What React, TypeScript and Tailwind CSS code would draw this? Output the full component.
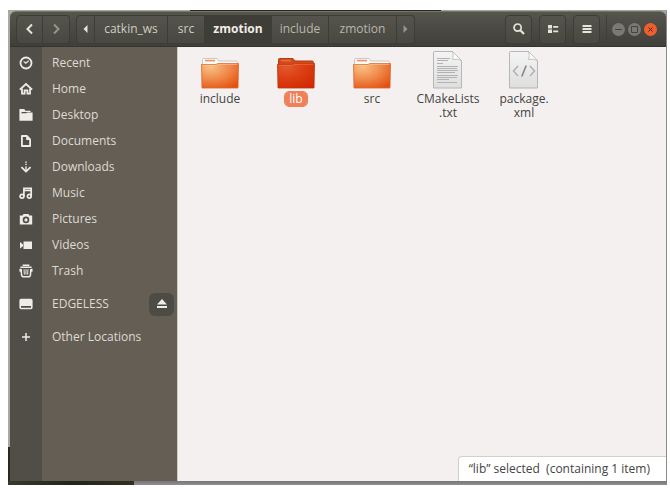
import React, { useId } from 'react';
import clsx from 'clsx';

const HEADER_BUTTON =
	'flex h-[29px] items-center justify-center border-[#3d3c36] bg-linear-to-b from-[#54534c] to-[#494841] text-[#e6e4dc]';

interface Crumb {
	label: string;
	width: string;
	active?: boolean;
	dim?: boolean;
}

const crumbs: Crumb[] = [
	{ label: 'catkin_ws', width: 'w-[73px]' },
	{ label: 'src', width: 'w-[37px]' },
	{ label: 'zmotion', width: 'w-[67px]', active: true },
	{ label: 'include', width: 'w-[57px]', dim: true },
	{ label: 'zmotion', width: 'w-[68px]', dim: true },
];

/* Sidebar glyphs, all on a 14x14 grid */
const icons: Record<string, React.ReactNode> = {
	recent: (
		<g fill="none" stroke="currentColor" strokeWidth="1.8">
			<circle cx="7" cy="7" r="5.5" />
			<path d="M4.6 5.4 6.8 7.2 9.6 4.8" strokeWidth="1.2" />
		</g>
	),
	home: (
		<g fill="none" stroke="currentColor" strokeWidth="1.8">
			<path d="M.8 7.6 7 2l6.2 5.6" />
			<path d="M3 6.500V11.700H5.600V8.300H8.400V11.700H11V6.500" />
		</g>
	),
	desktop: (
		<path d="M.4 1h5l.8 1.800h5.400V4H2.800v.8H2v7.900H.4ZM3.400 5.200H7L8 4.600h5.600v8.100H1.600V5.200Z" fill="currentColor" />
	),
	documents: (
		<g>
			<path d="M2.900 2h4.900l3.300 3.300v6.700H2.900Z" fill="none" stroke="currentColor" strokeWidth="1.8" strokeLinejoin="round" />
			<path d="M7.200 2v4h4Z" fill="currentColor" />
		</g>
	),
	downloads: (
		<g fill="none" stroke="currentColor" strokeWidth="1.8">
			<path d="M7 1.500v5" strokeDasharray="1.300 1" strokeWidth="1.500" />
			<path d="M7 6.800v4.500" strokeWidth="1.400" />
			<path d="M2.400 7.200 7 11.600l4.600-4.400" />
		</g>
	),
	music: (
		<g fill="none" stroke="currentColor" strokeWidth="1.7">
			<circle cx="3" cy="10.300" r="1.900" />
			<circle cx="10.300" cy="10.300" r="1.900" />
			<path d="M4.900 10.300V2.300h7.300v8M4.900 4.500h7.300" />
		</g>
	),
	pictures: (
		<path d="M4.500 2h5l.9 1.600h2.800v8.900H.8V3.600h2.800ZM7 4.600a3.300 3.300 0 1 0 0 6.600 3.300 3.300 0 0 0 0-6.600Zm0 1.700a1.600 1.600 0 1 1 0 3.200 1.600 1.600 0 0 1 0-3.200Z" fill="currentColor" fillRule="evenodd" />
	),
	videos: <path d="M4.500 3.500H13v7.500H4.500ZM1 4l3 2.400v1.800L1 10.600Z" fill="currentColor" />,
	trash: (
		<g fill="none" stroke="currentColor" strokeWidth="1.5">
			<path d="M3.600 1.300h6.800M1.400 3.300h11.200" />
			<path d="M1.200 4.800v3M12.800 4.800v3M2.200 5 2.500 10.600q.3 2.200 2.300 2.200h4.400q2 0 2.300-2.200L11.800 5" />
			<path d="M5 5.200l.4 5.400M7 5.200v5.400M9 5.200l-.4 5.400" strokeWidth="1" />
		</g>
	),
	drive: (
		<path d="M2 1.800h10q1.600 0 1.600 1.600v7.200q0 1.600-1.600 1.600H2q-1.600 0-1.600-1.600V3.400q0-1.600 1.600-1.600ZM2 9v1.700h10V9Z" fill="currentColor" fillRule="evenodd" />
	),
	plus: <path d="M7 3v8M3 7h8" stroke="currentColor" strokeWidth="1.5" />,
};

interface Place {
	label: string;
	icon: string;
	spaced?: boolean;
	ejectable?: boolean;
}

const places: Place[] = [
	{ label: 'Recent', icon: 'recent' },
	{ label: 'Home', icon: 'home' },
	{ label: 'Desktop', icon: 'desktop' },
	{ label: 'Documents', icon: 'documents' },
	{ label: 'Downloads', icon: 'downloads' },
	{ label: 'Music', icon: 'music' },
	{ label: 'Pictures', icon: 'pictures' },
	{ label: 'Videos', icon: 'videos' },
	{ label: 'Trash', icon: 'trash' },
	{ label: 'EDGELESS', icon: 'drive', spaced: true, ejectable: true },
	{ label: 'Other Locations', icon: 'plus', spaced: true },
];

function PlaceRow({ label, icon, spaced, ejectable }: Place) {
	return (
		<li className={clsx('flex h-[26px] items-center', spaced && 'mt-[7px]')}>
			<a href="#" className="flex flex-1 items-center">
				<span className="flex w-8 justify-center text-[#eeece7]">
					<svg width="14" height="14" viewBox="0 0 14 14">{icons[icon]}</svg>
				</span>
				<span className="pl-[10px] whitespace-nowrap">{label}</span>
			</a>
			{ejectable && (
				<button aria-label="Eject" className="mr-[3px] flex h-[23px] w-[25px] items-center justify-center rounded-md bg-[#4c4b44] text-[#eeece7]">
					<svg width="12" height="10" viewBox="0 0 12 10" fill="currentColor">
						<path d="M6 0 11 5.500H1ZM1 7h10v2H1Z" />
					</svg>
				</button>
			)}
		</li>
	);
}

function FolderIcon({ selected = false }: { selected?: boolean }) {
	const id = useId();
	return (
		<svg width="38" height="32" viewBox="0 0 38 32">
			<defs>
				<radialGradient id={id} cx="0.25" cy="0.15" r="1">
					<stop offset="0" stopColor={selected ? '#e2592b' : '#f8c083'} />
					<stop offset="0.5" stopColor={selected ? '#dc3d12' : '#ef8a4b'} />
					<stop offset="1" stopColor={selected ? '#cf2a04' : '#e5500f'} />
				</radialGradient>
			</defs>
			<path
				d="M1.500 10V2.500q0-1 1-1H16l2 2.500h17q1.500 0 1.500 1.500V10Z"
				fill={selected ? '#cf4a1d' : '#fbfaf8'}
				stroke={selected ? '#b53a12' : '#cbc8c3'}
			/>
			<path d="M4 3.600h10" stroke={selected ? '#ee6b38' : '#ef9160'} strokeWidth="1.6" />
			<path d="M.5 7.500H15l2-1h20.500L37 31H1Z" fill={`url(#${id})`} stroke={selected ? '#c33208' : '#d9662d'} strokeWidth="0.8" />
			<path d="M1.500 8.300H15.300l2-1H36.500" fill="none" stroke={selected ? '#e9784f' : '#f9c9a0'} strokeWidth="0.7" />
		</svg>
	);
}

function PaperIcon({ children }: { children: React.ReactNode }) {
	const id = useId();
	return (
		<svg width="30" height="38" viewBox="0 0 30 38">
			<defs>
				<linearGradient id={id} x1="0" y1="0" x2="0" y2="1">
					<stop offset="0" stopColor="#f4f4f4" />
					<stop offset="1" stopColor="#dededf" />
				</linearGradient>
			</defs>
			<path d="M1.500.5h18l9 9v27.500h-28V1.500q0-1 1-1Z" fill={`url(#${id})`} stroke="#b6b6b6" />
			<path d="M19.500.5q1.500 4 0 8 5-1 9 1Z" fill="#fcfcfc" stroke="#b9b9b9" strokeWidth="0.8" />
			{children}
		</svg>
	);
}

const textIcon = (
	<PaperIcon>
		<path
			d="M4 7.500h13M4 9.500h11M4 12.500h6M4 15.500h21M4 17.500h20M4 19.500h21M4 21.500h18M4 24.500h21M4 26.500h20M4 28.500h12M4 31.500h20"
			stroke="#b2b2b2"
			strokeWidth="1"
		/>
	</PaperIcon>
);

const xmlIcon = (
	<PaperIcon>
		<path d="M9 15 4.500 20 9 25M21 15l4.500 5L21 25" fill="none" stroke="#b0b0b0" strokeWidth="1.5" />
		<path d="M17.200 14.500 12.800 25.500" stroke="#858585" strokeWidth="1.6" />
	</PaperIcon>
);

interface FileItem {
	lines: string[];
	icon: React.ReactNode;
	selected?: boolean;
}

const files: FileItem[] = [
	{ lines: ['include'], icon: <FolderIcon /> },
	{ lines: ['lib'], icon: <FolderIcon selected />, selected: true },
	{ lines: ['src'], icon: <FolderIcon /> },
	{ lines: ['CMakeLists', '.txt'], icon: textIcon },
	{ lines: ['package.', 'xml'], icon: xmlIcon },
];

function HeaderBar() {
	return (
		<header className="flex h-9 items-center rounded-t-md border-t border-b border-t-[#77766e] border-b-[#35342f] bg-linear-to-b from-[#55544d] to-[#403f39] pr-[9px] pl-[6px]">
			<div className="flex">
				<button aria-label="Back" className={clsx(HEADER_BUTTON, 'w-[27px] rounded-l border')}>
					<svg width="10" height="12" viewBox="0 0 10 12" fill="none" stroke="currentColor" strokeWidth="2">
						<path d="M7 1.500 2.500 6 7 10.500" />
					</svg>
				</button>
				<button aria-label="Forward" className={clsx(HEADER_BUTTON, 'w-[27px] rounded-r border border-l-0')}>
					<svg width="10" height="12" viewBox="0 0 10 12" fill="none" stroke="#96948b" strokeWidth="2">
						<path d="M3 1.500 7.500 6 3 10.500" />
					</svg>
				</button>
			</div>

			<nav aria-label="Path" className="ml-[6px] flex">
				<button aria-label="Scroll path left" className={clsx(HEADER_BUTTON, 'w-[19px] rounded-l border')}>
					<svg width="5" height="8" viewBox="0 0 5 8" fill="currentColor">
						<path d="M4.500 0v8L.5 4Z" />
					</svg>
				</button>
				{crumbs.map(({ label, width, active, dim }, i) => (
					<button
						key={i}
						className={clsx(
							'flex h-[29px] items-center justify-center border-y border-r border-[#3d3c36]',
							width,
							active ? 'bg-[#3e3d38] font-bold text-[#f0eee6]' : 'bg-linear-to-b from-[#54534c] to-[#494841]',
							dim && 'text-[#b9b7ad]',
							!active && !dim && 'text-[#cfcdc3]',
						)}
					>
						{label}
					</button>
				))}
				<button aria-label="Scroll path right" className={clsx(HEADER_BUTTON, 'w-[18px] rounded-r border-y border-r')}>
					<svg width="5" height="8" viewBox="0 0 5 8" fill="#96948b">
						<path d="M.5 0v8l4-4Z" />
					</svg>
				</button>
			</nav>

			<div className="ml-auto flex gap-[7px]">
				<button aria-label="Search" className={clsx(HEADER_BUTTON, 'w-[27px] rounded border')}>
					<svg width="12" height="12" viewBox="0 0 12 12" fill="none" stroke="currentColor">
						<circle cx="4.600" cy="4.600" r="3.600" strokeWidth="1.7" />
						<path d="m7.300 7.300 3.700 3.700" strokeWidth="2.2" />
					</svg>
				</button>
				<button aria-label="List view" className={clsx(HEADER_BUTTON, 'w-[27px] rounded border')}>
					<svg width="12" height="10" viewBox="0 0 12 10" fill="currentColor">
						<path d="M1 1h4v3.500H1ZM1 5.500h4V9H1ZM6.200 2h5v1.700h-5ZM6.200 6.500h5v1.700h-5Z" />
					</svg>
				</button>
				<button aria-label="Menu" className={clsx(HEADER_BUTTON, 'w-[27px] rounded border')}>
					<svg width="10" height="10" viewBox="0 0 10 10" fill="currentColor">
						<path d="M.5 1h9v2h-9ZM.5 4h9v2h-9ZM.5 7h9v2h-9Z" />
					</svg>
				</button>
			</div>

			<div className="ml-[6px] flex h-7 items-center gap-[3px] border-l border-[#3f3e38] pl-[5px]">
				<button aria-label="Minimize" className="flex size-[13px] items-center justify-center rounded-full bg-[#7b7971] text-[#45443d]">
					<svg width="7" height="7" viewBox="0 0 7 7" stroke="currentColor"><path d="M0 3.500h7" /></svg>
				</button>
				<button aria-label="Maximize" className="flex size-[13px] items-center justify-center rounded-full bg-[#7b7971] text-[#45443d]">
					<svg width="7" height="7" viewBox="0 0 7 7" fill="none" stroke="currentColor"><path d="M.5.5h6v6h-6Z" /></svg>
				</button>
				<button aria-label="Close" className="flex size-[13px] items-center justify-center rounded-full bg-[#ef5f2e] text-[#4a2113]">
					<svg width="5" height="5" viewBox="0 0 5 5" stroke="currentColor"><path d="m.5.5 4 4m0-4-4 4" /></svg>
				</button>
			</div>
		</header>
	);
}

export default function App() {
	return (
		<div className="flex min-h-screen flex-col bg-white pt-[10px] pr-[3px] pb-[3px] pl-2 font-['Open_Sans',sans-serif] text-[12px] leading-[14px]">
			{/* Desktop showing around the window */}
			<div className="flex h-px">
				<div className="w-[182px] bg-[#a5a7a0]" />
				<div className="w-[251px] bg-[#292621]" />
				<div className="flex-1 bg-[#a3a19c]" />
			</div>

			<div className="flex flex-1">
				<div className="flex w-[2px] flex-col">
					<div className="flex-1 bg-[#aaa99f]" />
					<div className="h-[34px] bg-[#2b2a1d]" />
				</div>

				<div className="flex min-w-0 flex-1 flex-col bg-[#aaa99f]">
					<HeaderBar />
					<div className="flex flex-1">
						<aside className="w-[167px] bg-linear-to-r from-[#504e47] from-[32px] to-[#645e55] to-[32px] pt-[3px] text-[#dedbd2]">
							<ul>
								{places.map((place) => (
									<PlaceRow key={place.label} {...place} />
								))}
							</ul>
						</aside>

						<main className="flex min-w-0 flex-1 flex-col border-l border-[#cfccc5] bg-[#f3f0ef] text-[#45443f]">
							<ul className="flex flex-wrap pt-[4px] pl-1">
								{files.map(({ lines, icon, selected }) => (
									<li key={lines[0]}>
										<button className="flex w-[76px] flex-col items-center gap-[3px]">
											<span className="flex h-[38px] items-end">{icon}</span>
											<span className={clsx(selected && 'rounded-sm bg-[#ee8158] px-[4px] text-white outline outline-[#ee8158]')}>
												{lines.map((line) => (
													<span key={line} className="block">{line}</span>
												))}
											</span>
										</button>
									</li>
								))}
							</ul>
							<div role="status" className="mt-auto ml-auto rounded-tl border-t border-l border-[#d3d0cc] bg-white pt-[5px] pr-4 pb-[5px] pl-[10px] whitespace-pre">
								“lib” selected  (containing 1 item)
							</div>
						</main>
					</div>
				</div>

				<div className="w-px bg-[#8d8b88]" />
			</div>

			<div className="flex h-1">
				<div className="w-[126px] bg-linear-to-r from-[#3a3a2b] via-[#23251a] to-[#30301f]" />
				<div className="flex-1 bg-linear-to-b from-[#777577] to-[#918f90]" />
			</div>
		</div>
	);
}
